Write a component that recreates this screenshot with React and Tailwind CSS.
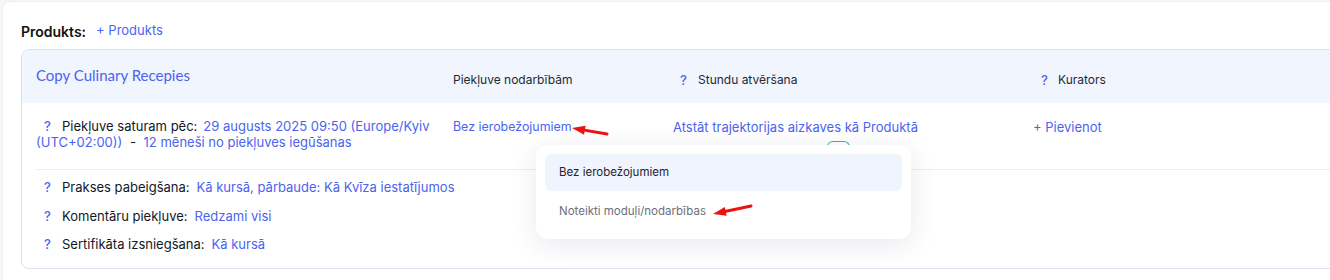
import React from 'react';

const blue = 'text-[#4b63ef]';

const Q = ({ className = '' }) => (
  <span className={`${blue} font-medium inline-block ${className}`}>?</span>
);

// red annotation arrow, drawn from tail to tip
const Arrow = ({ x1, y1, x2, y2 }) => {
  const dx = x2 - x1;
  const dy = y2 - y1;
  const len = Math.sqrt(dx * dx + dy * dy);
  const ux = dx / len;
  const uy = dy / len;
  const head = 13;
  const half = 4.5;
  const bx = x2 - ux * head;
  const by = y2 - uy * head;
  const p1 = `${bx - uy * half},${by + ux * half}`;
  const p2 = `${bx + uy * half},${by - ux * half}`;
  return (
    <g>
      <line x1={x1} y1={y1} x2={bx + ux * 2} y2={by + uy * 2} stroke="#ee1111" strokeWidth="3" strokeLinecap="round" />
      <polygon points={`${x2},${y2} ${p1} ${p2}`} fill="#ee1111" />
    </g>
  );
};

const SettingRow = ({ label, value }) => (
  <div className="flex items-center h-[18px] text-[13px] text-[#111827]">
    <Q className="ml-[8px] w-[18px]" />
    <span>{label}</span>
    <span className={`${blue} ml-[7px]`}>{value}</span>
  </div>
);

export default function App() {
  return (
    <div className="h-[280px] bg-[#f6f6f7] overflow-hidden" style={{ fontFamily: 'Inter, "Noto Sans", sans-serif' }}>
      <div className="ml-[2px] mt-[1px] w-[1360px] h-[300px] bg-white rounded-lg border border-[#efeff1] pl-[18px] pt-[20px]">
        <div className="flex items-center h-[18px]">
          <span className="font-semibold text-[14px] text-[#111111]">Produkts:</span>
          <span className={`${blue} text-[13px] ml-[10px]`}>+ Produkts</span>
        </div>

        <div className="relative mt-[9px] w-[1330px] border border-[#dfe2ee] rounded-lg">
          {/* header */}
          <div className="flex h-[53px] bg-[#f0f5fe] rounded-t-lg pl-[14px] text-[12px] text-[#1f2937]">
            <div className="w-[417px] pt-[16px]">
              <span className={`${blue} text-[15px] leading-[18px]`} style={{ fontFamily: 'Lato, Inter, sans-serif' }}>
                Copy Culinary Recepies
              </span>
            </div>
            <div className="w-[220px] pt-[21px] leading-[18px]">Piekļuve nodarbībām</div>
            <div className="w-[360px] pt-[21px] leading-[18px] flex">
              <Q className="ml-[7px] w-[18px] text-[13px]" />
              <span>Stundu atvēršana</span>
            </div>
            <div className="pt-[21px] leading-[18px] flex">
              <Q className="ml-[8px] w-[17px] text-[13px]" />
              <span>Kurators</span>
            </div>
          </div>

          {/* first row */}
          <div className="flex pl-[14px] pt-[15px] pb-[18px] text-[13px] leading-[16px]">
            <div className="w-[417px]">
              <div className="flex">
                <Q className="ml-[8px] w-[18px]" />
                <span className="text-[#111827]">Piekļuve saturam pēc:</span>
                <span className={`${blue} ml-[6px]`}>29 augusts 2025 09:50 (Europe/Kyiv</span>
              </div>
              <div className={blue}>
                (UTC+02:00)) <span className="text-[#111827] mx-[4px]">-</span> 12 mēneši no piekļuves iegūšanas
              </div>
            </div>
            <div className={`w-[220px] ${blue} pt-[1px] text-[12.4px]`}>Bez ierobežojumiem</div>
            <div className="w-[360px] pt-[1px]">
              <div className={blue}>Atstāt trajektorijas aizkaves kā Produktā</div>
              <div className="ml-[154px] mt-[6px] w-[23px] h-[10px] border-t border-x border-[#3fb98a] rounded-t-md" />
            </div>
            <div className={`${blue} pt-[1px]`}>+ Pievienot</div>
          </div>

          {/* other settings */}
          <div className="ml-[14px] border-t border-[#ececef] pt-[9px] pb-[14px] flex flex-col gap-[10.5px]">
            <SettingRow label="Prakses pabeigšana:" value="Kā kursā, pārbaude: Kā Kvīza iestatījumos" />
            <SettingRow label="Komentāru piekļuve:" value="Redzami visi" />
            <SettingRow label="Sertifikāta izsniegšana:" value="Kā kursā" />
          </div>

          {/* dropdown */}
          <div className="absolute left-[514px] top-[95px] w-[375px] h-[94px] bg-white rounded-xl shadow-[0_6px_28px_rgba(30,40,90,0.10)] p-[9px] text-[11.5px]">
            <div className="h-[37px] rounded-md bg-[#eff4fe] flex items-center pl-[14px] text-[#1f2430]">
              Bez ierobežojumiem
            </div>
            <div className="h-[40px] flex items-center pl-[14px] pt-[2px] text-[#6b6f7b]">
              Noteikti moduļi/nodarbības
            </div>
          </div>

          <svg className="absolute left-0 top-0 pointer-events-none" width="800" height="220">
            <Arrow x1={585} y1={84} x2={550} y2={78} />
            <Arrow x1={729} y1={156} x2={691} y2={164} />
          </svg>
        </div>
      </div>
    </div>
  );
}
